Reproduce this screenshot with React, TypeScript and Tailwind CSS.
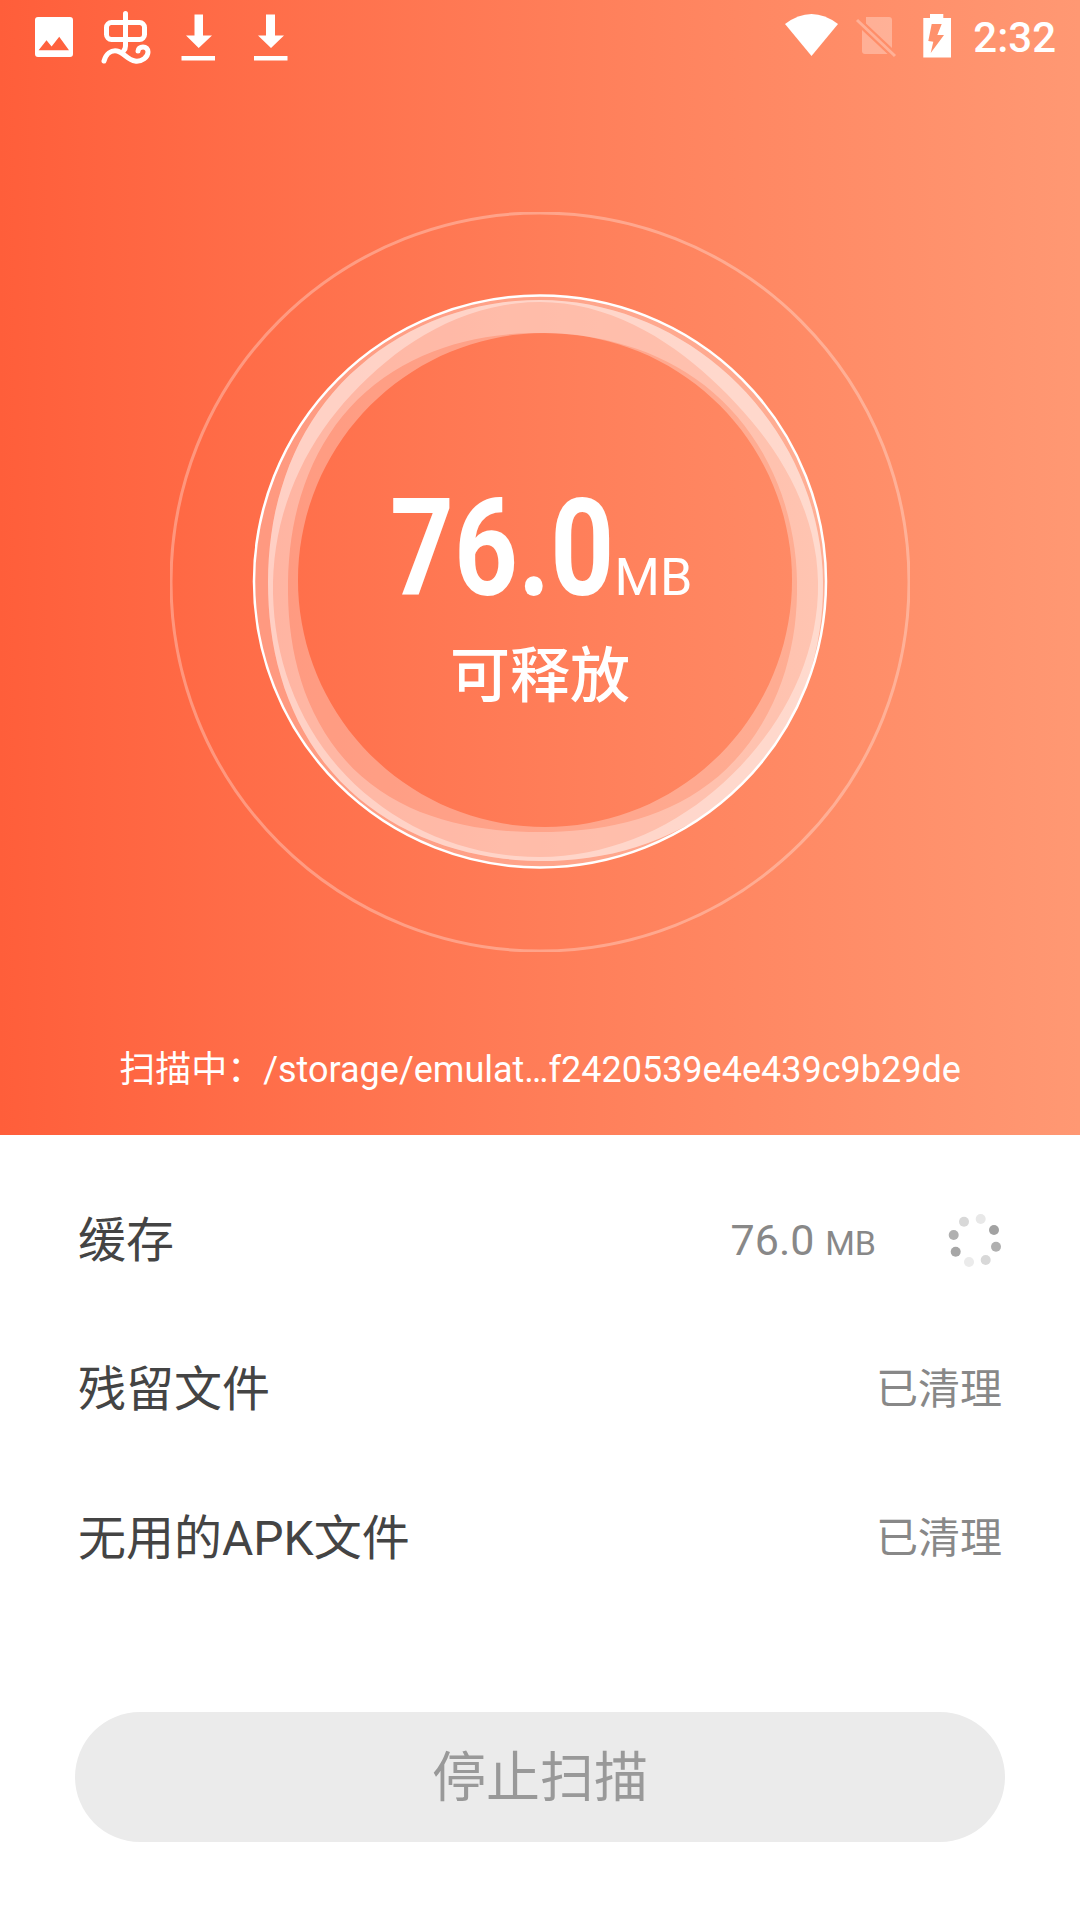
import React from "react";

const cjk = { fontFamily: 'Roboto, "Noto Sans CJK SC", sans-serif' };

function StatusLeft() {
  return (
    <svg width="300" height="75" viewBox="0 0 300 75" fill="none" className="shrink-0">
      <path
        fillRule="evenodd"
        fill="#fff"
        d="M38 17h32a3 3 0 0 1 3 3v34a3 3 0 0 1-3 3H38a3 3 0 0 1-3-3V20a3 3 0 0 1 3-3zM38.600 50.300H69L59.200 36.800 51.600 46.500 46.500 40.300z"
      />
      <g stroke="#fff" strokeWidth="5" strokeLinecap="round" strokeLinejoin="round">
        <rect x="106.500" y="22.500" width="38" height="17" rx="5" />
        <path d="M125.500 13.500V46q0 3-2 5" />
        <path d="M104 61c2-7 7-11 13-10 6 1 11 9 18 10 7 1 13-4 13-9 0-3-2-5-5-5s-5 2-5 4" />
      </g>
      <g fill="#fff">
        <path d="M194.500 14.500h8.500v21h9L198.700 48 186 35.500h8.500z" />
        <rect x="181.500" y="56" width="33.500" height="4.500" />
        <path d="M266 14.500h9v21h9L271 48 258 35.500h8z" />
        <rect x="254" y="56" width="33.500" height="4.500" />
      </g>
    </svg>
  );
}

function StatusRight() {
  return (
    <div className="flex items-center">
      <svg width="180" height="75" viewBox="780 0 180 75" fill="#fff">
        <path d="M785 24Q811.500 4 838 24L811.500 56z" />
        <g opacity="0.3">
          <path d="M866 17h23q3 0 3 3v28L866 23.500z" />
          <path d="M862 30l25.600 24H865q-3 0-3-3z" />
          <path d="M857 20l38 36" stroke="#fff" strokeWidth="3" fill="none" />
        </g>
        <path
          fillRule="evenodd"
          d="M930 14h13.300v4H951v39.500h-27.700V18H930zM931.700 24h10l-4.400 11H944l-13.300 18 2.600-11.300-5-.7z"
        />
      </svg>
      <span className="ml-[13px] text-[42px] leading-none font-medium text-white" style={{ fontFamily: "Roboto, sans-serif" }}>
        2:32
      </span>
    </div>
  );
}

// smooth closed outline from radii sampled every 45deg, starting at north, clockwise
function blob(radii: number[], cx = 540, cy = 582) {
  const n = radii.length;
  const at = (i: number) => radii[((i % n) + n) % n];
  const pts: string[] = [];
  for (let k = 0; k < 144; k++) {
    const u = (k / 144) * n;
    const i = Math.floor(u);
    const t = u - i;
    const r =
      0.5 *
      (2 * at(i) +
        (at(i + 1) - at(i - 1)) * t +
        (2 * at(i - 1) - 5 * at(i) + 4 * at(i + 1) - at(i + 2)) * t * t +
        (3 * at(i) - at(i - 1) - 3 * at(i + 1) + at(i + 2)) * t * t * t);
    const a = (k / 144) * Math.PI * 2;
    pts.push(`${(cx + r * Math.sin(a)).toFixed(1)} ${(cy - r * Math.cos(a)).toFixed(1)}`);
  }
  return `M${pts.join("L")}z`;
}

const base = blob([247, 247, 247, 247, 247, 247, 247, 247], 545, 580);
const midInner = blob([249, 257, 257, 264, 250, 264, 252, 258]);
const brightInner = blob([280, 265, 278, 272, 275, 274, 267, 266]);
const outer = blob([282, 280, 283, 286, 279, 282, 272, 281]);
const edge = blob([286, 286, 286, 286, 286, 286, 286, 286]);

function Ring() {
  return (
    <svg width="740" height="740" viewBox="170 212 740 740" fill="none" className="absolute inset-0">
      <circle cx="540" cy="582" r="369" stroke="#fff" strokeOpacity="0.3" strokeWidth="3" />
      <path fill="#fff" fillOpacity="0.3" fillRule="evenodd" d={edge + base} />
      <path fill="#fff" fillOpacity="0.27" fillRule="evenodd" d={outer + midInner} />
      <path fill="#fff" fillOpacity="0.37" fillRule="evenodd" d={outer + brightInner} />
      <circle cx="540" cy="581.500" r="286" stroke="#fff" strokeWidth="2.500" />
    </svg>
  );
}

const dots: [number, number, string][] = [
  [980.7, 1218, "#e8e8e8"],
  [994, 1229, "#a2a2a2"],
  [996, 1245.7, "#b0b0b0"],
  [985.7, 1259, "#d8d8d8"],
  [969, 1261, "#ebebeb"],
  [955.7, 1250.7, "#a6a6a6"],
  [953.7, 1234, "#b0b0b0"],
  [964, 1220.7, "#d8d8d8"],
];

function Spinner() {
  return (
    <svg width="54" height="54" viewBox="948 1213 54 54">
      {dots.map(([x, y, c]) => (
        <circle key={x} cx={x} cy={y} r="5" fill={c} />
      ))}
    </svg>
  );
}

export default function App() {
  return (
    <div className="w-[1080px] h-[1920px] bg-white flex flex-col overflow-hidden" style={cjk}>
      <div className="h-[1135px] bg-gradient-to-r from-[#ff5e3a] to-[#ff9873] flex flex-col items-center">
        <div className="w-full h-[75px] flex items-center justify-between pr-[24px]">
          <StatusLeft />
          <StatusRight />
        </div>
        <div className="relative mt-[137px] w-[740px] h-[740px] flex flex-col items-center text-white">
          <Ring />
          <div className="mt-[276px] flex items-baseline h-[121px] ml-[2px]">
            <span
              className="w-[225px] block whitespace-nowrap origin-left scale-x-[.82] text-[136px] leading-[122px] font-bold text-white"
              style={{ fontFamily: "Roboto, sans-serif" }}
            >
              76.0
            </span>
            <span className="text-[52px] leading-none" style={{ fontFamily: "Roboto, sans-serif" }}>
              MB
            </span>
          </div>
          <div className="mt-[28px] text-[60px] leading-[80px] font-medium">可释放</div>
        </div>
        <div className="mt-[94px] text-[36px] leading-[48px] text-white whitespace-nowrap">
          扫描中：/storage/emulat…f2420539e4e439c9b29de
        </div>
      </div>

      <div className="flex flex-col px-[78px] pt-[31px]">
        <div className="h-[149px] flex items-center justify-between">
          <span className="text-[48px] text-[#444]">缓存</span>
          <div className="flex items-center">
            <span className="text-[43px] text-[#888]">
              76.0 <span className="text-[34px]">MB</span>
            </span>
            <span className="ml-[72px] flex">
              <Spinner />
            </span>
          </div>
        </div>
        <div className="h-[149px] flex items-center justify-between">
          <span className="text-[48px] text-[#444]">残留文件</span>
          <span className="text-[42px] text-[#888]">已清理</span>
        </div>
        <div className="h-[149px] flex items-center justify-between">
          <span className="text-[48px] text-[#444]">无用的APK文件</span>
          <span className="text-[42px] text-[#888]">已清理</span>
        </div>
      </div>

      <div className="mt-[99px] mx-[75px] h-[130px] pt-[3px] rounded-full bg-[#ebebeb] flex items-center justify-center text-[54px] text-[#999]">
        停止扫描
      </div>
    </div>
  );
}
